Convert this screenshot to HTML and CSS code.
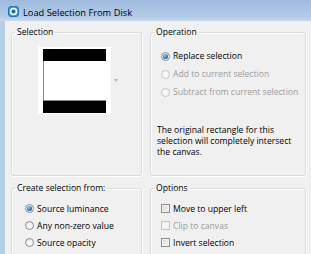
FILE: index.html
```html
<!DOCTYPE html>
<html>
  <head>
    <meta charset="UTF-8" />
    <title>Load Selection From Disk</title>
    <link rel="stylesheet" href="styles.css">
  </head>

  <body>
    <div class="window">
      <div class="titlebar">
        <svg class="app-icon" width="11" height="11" viewBox="0 0 11 11">
          <rect x="0.5" y="0.5" width="10" height="10" rx="2.5" fill="#2e9fd8" stroke="#1f78b4" />
          <circle cx="5.5" cy="5.5" r="3" fill="none" stroke="#fff" stroke-width="1.5" />
          <circle cx="5.5" cy="5.5" r="1.4" fill="#1b5f9c" />
        </svg>
        <span class="title">Load Selection From Disk</span>
      </div>

      <div class="client">
        <fieldset class="group group-top">
          <legend>Selection</legend>
          <div class="preview-row">
            <div class="preview"><div class="preview-img"></div></div>
            <span class="drop-arrow"></span>
          </div>
        </fieldset>

        <fieldset class="group group-top">
          <legend>Operation</legend>
          <div class="choices choices-op">
            <label class="choice"><span class="radio checked"></span>Replace selection</label>
            <label class="choice disabled"><span class="radio"></span>Add to current selection</label>
            <label class="choice disabled"><span class="radio"></span>Subtract from current selection</label>
          </div>
          <p class="note">The original rectangle for this<br />selection will completely intersect<br />the canvas.</p>
        </fieldset>

        <fieldset class="group group-bottom">
          <legend>Create selection from:</legend>
          <div class="choices choices-src">
            <label class="choice short"><span class="radio checked"></span>Source luminance</label>
            <label class="choice short"><span class="radio"></span>Any non-zero value</label>
            <label class="choice short"><span class="radio"></span>Source opacity</label>
          </div>
        </fieldset>

        <fieldset class="group group-bottom">
          <legend>Options</legend>
          <div class="choices choices-opt">
            <label class="choice short"><span class="check"></span>Move to upper left</label>
            <label class="choice short disabled"><span class="check"></span>Clip to canvas</label>
            <label class="choice short"><span class="check"></span>Invert selection</label>
          </div>
        </fieldset>
      </div>
    </div>
  </body>
</html>
```

FILE: styles.css
```css
body {
  margin: 0;
  padding: 0;
  font-family: "Open Sans", "Noto Sans", sans-serif;
  font-size: 8.6px;
  color: #000;
  background-color: #f0f0f0;
}

.window {
  width: 311px;
  height: 254px;
  overflow: hidden;
}

.titlebar {
  height: 21px;
  display: flex;
  align-items: center;
  gap: 4px;
  padding: 2px 0 0 8px;
  box-sizing: border-box;
  background: linear-gradient(#9fbadd, #b3cbe7 80%, #c9dbef);
}

.app-icon {
  flex: none;
  margin-top: -1px;
}

.title {
  font-size: 9.3px;
  padding-top: 1px;
}

.client {
  display: grid;
  grid-template-columns: 131px 156px;
  grid-template-rows: 150px 80px;
  column-gap: 8px;
  row-gap: 6px;
  height: 233px;
  padding: 5px 0 0 6px;
  border-left: 5px solid #b8cfe9;
  box-sizing: border-box;
}

.group {
  margin: 0;
  padding: 0;
  min-width: 0;
  border: 1px solid #d5dbe0;
  border-radius: 3px;
  box-shadow: inset 1px 1px 0 #fff, 1px 1px 0 #fff;
  box-sizing: border-box;
}

.group legend {
  margin-left: 3px;
  padding: 0 2px;
  line-height: 12px;
}

.preview-row {
  display: flex;
  align-items: center;
  gap: 3px;
  padding: 9px 0 0 26px;
}

.preview {
  width: 73px;
  height: 67px;
  padding: 2px 0 0 5px;
  background-color: #fff;
  box-sizing: border-box;
}

.preview-img {
  width: 63px;
  height: 40px;
  border-top: 12px solid #000;
  border-bottom: 12px solid #000;
  background-color: #fff;
  box-shadow: inset 1px -1px 0 #8a8a8a;
}

.drop-arrow {
  width: 0;
  height: 0;
  border-left: 2px solid transparent;
  border-right: 2px solid transparent;
  border-top: 3px solid #b4b4b4;
}

.choices {
  display: flex;
  flex-direction: column;
}

.choices-op {
  padding: 9px 0 0 10px;
}

.choices-src {
  padding: 6px 0 0 13px;
}

.choices-opt {
  padding: 6px 0 0 10px;
}

.choice {
  display: flex;
  align-items: center;
  gap: 3px;
  height: 18px;
  white-space: nowrap;
}

.choice.short {
  height: 17px;
}

.choice.disabled {
  color: #9c9c9c;
}

.radio {
  flex: none;
  width: 9px;
  height: 9px;
  border: 1px solid #8c8e90;
  border-radius: 50%;
  background: radial-gradient(circle at 60% 60%, #fff, #dedede);
  box-sizing: border-box;
  display: flex;
  align-items: center;
  justify-content: center;
}

.radio.checked::after {
  content: "";
  width: 5px;
  height: 5px;
  border-radius: 50%;
  background: radial-gradient(circle at 40% 35%, #8fd2f6, #2a6fb6 55%, #163f78);
}

.disabled .radio {
  border-color: #c2c4c6;
  background: #f6f6f6;
}

.check {
  flex: none;
  width: 9px;
  height: 9px;
  border: 1px solid #8c8e90;
  background: linear-gradient(135deg, #d6d6d6, #f6f6f6);
  box-shadow: inset 0 0 0 1px #f2f2f2;
  box-sizing: border-box;
}

.disabled .check {
  border-color: #c2c4c6;
  background: #f6f6f6;
}

.note {
  margin: 24px 0 0 6px;
  line-height: 11px;
}
```
